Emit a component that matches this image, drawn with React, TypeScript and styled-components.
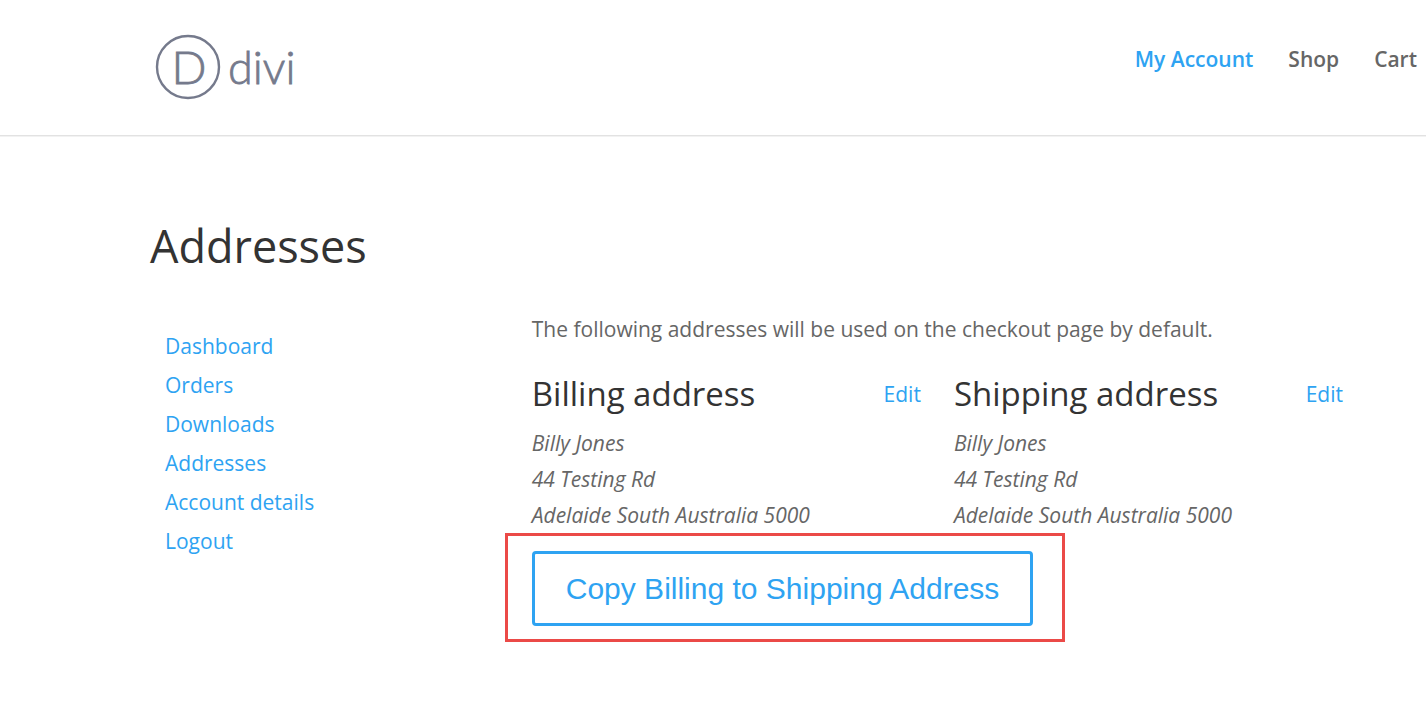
import React from "react";
import styled, { createGlobalStyle } from "styled-components";

const GlobalStyle = createGlobalStyle`
  *, *::before, *::after { box-sizing: border-box; }
  body {
    margin: 0;
    background: #fff;
    color: #666;
    font-family: "Open Sans", Arial, sans-serif;
    font-size: 21px;
    font-weight: 400;
    line-height: 36px;
  }
`;

const Link = styled.a`
  color: #2ea3f2;
  text-decoration: none;
`;

const Header = styled.header`
  display: flex;
  justify-content: space-between;
  align-items: flex-start;
  padding: 32px 9px 32px 153px;
  border-bottom: 1px solid #e2e2e2;
  box-shadow: 0 1px 0 #f2f2f2;
`;

const LogoLink = styled(Link)`
  display: block;
  height: 71px;
`;

const Nav = styled.nav`
  display: flex;
  gap: 35px;
  padding-top: 9px;
`;

const NavLink = styled(Link)<{ $active?: boolean }>`
  color: ${({ $active }) => ($active ? "#2ea3f2" : "#666")};
  font-weight: 600;
`;

const Main = styled.main`
  padding: 81px 83px 74px 150px;
`;

const PageTitle = styled.h1`
  margin: 0 0 36px;
  color: #333;
  font-size: 45px;
  font-weight: 400;
  line-height: 58px;
`;

const Account = styled.div`
  display: grid;
  grid-template-columns: 32fr 68fr;
`;

const Menu = styled.ul`
  margin: 0;
  padding: 16px 15px;
  list-style: none;
`;

const MenuItem = styled.li`
  line-height: 39px;
`;

const Intro = styled.p`
  margin: 0 0 24px;
`;

const Columns = styled.div`
  display: grid;
  grid-template-columns: 1fr 1fr;
  gap: 33px;
`;

const CardHeader = styled.div`
  display: flex;
  justify-content: space-between;
  align-items: center;
  margin-bottom: 9px;
`;

const CardTitle = styled.h2`
  margin: 0;
  color: #333;
  font-size: 33px;
  font-weight: 400;
  line-height: 45px;
`;

const Address = styled.address`
  font-style: italic;
`;

const Action = styled.div`
  position: relative;
  width: fit-content;
  margin-top: 18px;
`;

const Highlight = styled.div`
  position: absolute;
  inset: -18px -32px -16px -27px;
  border: 3px solid #eb4a47;
  pointer-events: none;
`;

const CopyButton = styled.button`
  display: block;
  padding: 9px 31px;
  border: 3px solid #2ea3f2;
  border-radius: 4px;
  background: transparent;
  color: #2ea3f2;
  font-family: "Liberation Sans", Arial, sans-serif;
  font-size: 30px;
  line-height: 51px;
  cursor: pointer;
`;

const Wordmark = styled.text`
  fill: #757a8c;
  stroke: #757a8c;
  stroke-width: 0.8px;
  font-family: Lato, sans-serif;
  font-weight: 300;
`;

const Logo = () => (
  <svg width="150" height="71" viewBox="0 0 150 71" role="img" aria-label="Divi">
    <circle cx="35" cy="35" r="31" fill="none" stroke="#757a8c" strokeWidth="2.4" />
    <Wordmark x="36" y="52" fontSize="46" textAnchor="middle">D</Wordmark>
    <Wordmark x="75" y="52" fontSize="45">divi</Wordmark>
  </svg>
);

const menu = ["Dashboard", "Orders", "Downloads", "Addresses", "Account details", "Logout"];

const AddressCard = ({ title }: { title: string }) => (
  <section>
    <CardHeader>
      <CardTitle>{title}</CardTitle>
      <Link href="#edit">Edit</Link>
    </CardHeader>
    <Address>
      Billy Jones
      <br />
      44 Testing Rd
      <br />
      Adelaide South Australia 5000
    </Address>
  </section>
);

export default function App() {
  return (
    <>
      <GlobalStyle />
      <Header>
        <LogoLink href="#home">
          <Logo />
        </LogoLink>
        <Nav>
          <NavLink href="#account" $active>My Account</NavLink>
          <NavLink href="#shop">Shop</NavLink>
          <NavLink href="#cart">Cart</NavLink>
        </Nav>
      </Header>
      <Main>
        <PageTitle>Addresses</PageTitle>
        <Account>
          <nav>
            <Menu>
              {menu.map((item) => (
                <MenuItem key={item}>
                  <Link href="#menu">{item}</Link>
                </MenuItem>
              ))}
            </Menu>
          </nav>
          <div>
            <Intro>The following addresses will be used on the checkout page by default.</Intro>
            <Columns>
              <AddressCard title="Billing address" />
              <AddressCard title="Shipping address" />
            </Columns>
            <Action>
              <CopyButton type="button">Copy Billing to Shipping Address</CopyButton>
              <Highlight />
            </Action>
          </div>
        </Account>
      </Main>
    </>
  );
}
